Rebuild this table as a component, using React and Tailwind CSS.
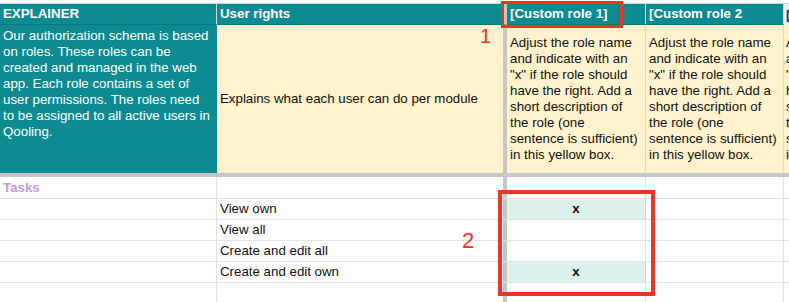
const roleText = [
	"Adjust the role name",
	"and indicate with an",
	'"x" if the role should',
	"have the right. Add a",
	"short description of",
	"the role (one",
	"sentence is sufficient)",
	"in this yellow box.",
];

const explainer = [
	"Our authorization schema is based",
	"on roles. These roles can be",
	"created and managed in the web",
	"app. Each role contains a set of",
	"user permissions. The roles need",
	"to be assigned to all active users in",
	"Qooling.",
];

const tasks = [
	{ label: "View own", x: true },
	{ label: "View all", x: false },
	{ label: "Create and edit all", x: false },
	{ label: "Create and edit own", x: true },
	{ label: "", x: false },
	{ label: "", x: false },
];

function Lines({ lines }) {
	return lines.map((l, i) => (
		<div key={i} className="whitespace-nowrap">
			{l}
		</div>
	));
}

export default function App() {
	return (
		<div
			className="relative w-[789px] h-[302px] overflow-hidden bg-white text-[13.3px] leading-4 text-[#111]"
			style={{ fontFamily: '"Liberation Sans", Arial, sans-serif' }}
		>
			<div className="h-[3px]" />
			{/* header row */}
			<div className="flex h-[22px] border-t border-[#d4d4d4] font-bold text-white">
				<div className="w-[217px] shrink-0 bg-[#0d8b91] border-r border-[#d6d6d6] border-b border-b-[#0a777d] px-[3px] flex items-center">EXPLAINER</div>
				<div className="w-[290px] shrink-0 bg-[#0d8b91] border-r-4 border-[#c6c6c6] border-b border-b-[#0a777d] px-[3px] flex items-center">User rights</div>
				<div className="w-[139px] shrink-0 bg-[#0d8b91] border-r border-[#d6d6d6] border-b border-b-[#0a777d] px-[3px] flex items-center whitespace-nowrap">[Custom role 1]</div>
				<div className="w-[138px] shrink-0 bg-[#0d8b91] border-r border-[#d6d6d6] border-b border-b-[#0a777d] px-[3px] flex items-center whitespace-nowrap">[Custom role 2</div>
				<div className="flex-1 bg-[#e8eef8] text-[#333] px-[2px] flex items-center overflow-hidden whitespace-nowrap">[</div>
			</div>
			{/* description row */}
			<div className="flex h-[152px] border-b-4 border-[#c6c6c6]">
				<div className="w-[217px] shrink-0 bg-[#0d8b91] text-white px-[3px] pt-[3px] border-r border-[#0d8b91]">
					<Lines lines={explainer} />
				</div>
				<div className="w-[290px] shrink-0 bg-[#fff2cc] border-r-4 border-[#c6c6c6] px-[3px] flex items-center">
					Explains what each user can do per module
				</div>
				<div className="w-[139px] shrink-0 bg-[#fff2cc] border-r border-[#e8dcb4] px-[3px] flex flex-col justify-center">
					<Lines lines={roleText} />
				</div>
				<div className="w-[138px] shrink-0 bg-[#fff2cc] border-r border-[#e8dcb4] px-[3px] flex flex-col justify-center">
					<Lines lines={roleText} />
				</div>
				<div className="flex-1 bg-[#fff2cc] px-[2px] flex flex-col justify-center overflow-hidden">
					<Lines lines={roleText.map((l) => l.slice(0, 1))} />
				</div>
			</div>
			{/* Tasks heading */}
			<div className="flex h-[22px] border-b border-[#e2e2e2]">
				<div className="w-[217px] shrink-0 border-r border-[#e2e2e2] px-[3px] flex items-center font-bold text-[#c09ad2]">Tasks</div>
				<div className="w-[290px] shrink-0 border-r-4 border-[#c6c6c6]" />
				<div className="w-[139px] shrink-0 border-r border-[#e2e2e2]" />
				<div className="w-[138px] shrink-0 border-r border-[#e2e2e2]" />
				<div className="flex-1" />
			</div>
			{tasks.map((t, i) => (
				<div key={i} className="flex h-[21px] border-b border-[#e2e2e2]">
					<div className="w-[217px] shrink-0 border-r border-[#e2e2e2]" />
					<div className="w-[290px] shrink-0 border-r-4 border-[#c6c6c6] px-[3px] flex items-center">{t.label}</div>
					<div
						className={
							t.x
								? "w-[139px] shrink-0 bg-[#dcf0ee] border-r border-[#b9d9d5] flex items-center justify-center font-bold"
								: "w-[139px] shrink-0 border-r border-[#e2e2e2]"
						}
					>
						{t.x ? "x" : ""}
					</div>
					<div className="w-[138px] shrink-0 border-r border-[#e2e2e2]" />
					<div className="flex-1" />
				</div>
			))}

			{/* annotations */}
			<div className="absolute left-[501px] top-[1px] w-[122px] h-[27px] border-[3px] border-[#ef3324]" />
			<div className="absolute left-[480px] top-[26px] text-[20px] leading-[20px] text-[#ef3324]">1</div>
			<div className="absolute left-[498px] top-[190px] w-[157px] h-[106px] border-4 border-[#ef3324]" />
			<div className="absolute left-[462px] top-[230px] text-[22px] leading-[22px] text-[#ef3324]">2</div>
		</div>
	);
}
